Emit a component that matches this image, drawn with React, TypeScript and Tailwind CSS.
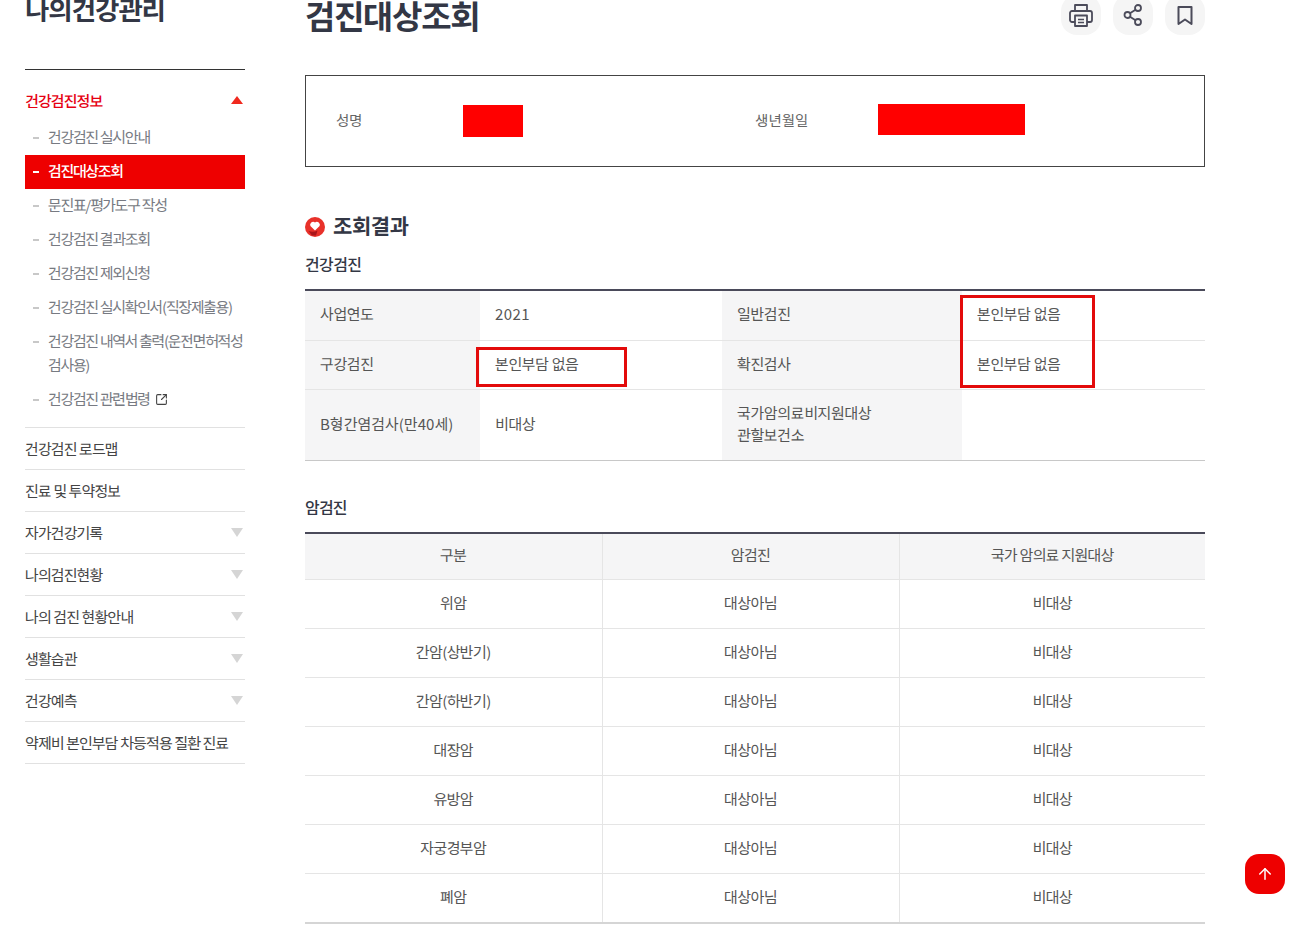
import { ArrowUp, SquareArrowOutUpRight } from "lucide-react";

const SUB_MENU = [
  "건강검진 실시안내",
  "검진대상조회",
  "문진표/평가도구 작성",
  "건강검진 결과조회",
  "건강검진 제외신청",
  "건강검진 실시확인서(직장제출용)",
  "건강검진 내역서 출력(운전면허적성검사용)",
  "건강검진 관련법령",
];

const MAIN_MENU = [
  { label: "건강검진 로드맵", arrow: false },
  { label: "진료 및 투약정보", arrow: false },
  { label: "자가건강기록", arrow: true },
  { label: "나의검진현황", arrow: true },
  { label: "나의 검진 현황안내", arrow: true },
  { label: "생활습관", arrow: true },
  { label: "건강예측", arrow: true },
  { label: "약제비 본인부담 차등적용 질환 진료", arrow: false },
];

const CANCERS = ["위암", "간암(상반기)", "간암(하반기)", "대장암", "유방암", "자궁경부암", "폐암"];

function Sidebar() {
  return (
    <aside className="w-[220px] shrink-0">
      <h2 className="mt-[-11px] h-[80px] text-[26.5px] leading-[40px] font-bold text-[#333745] tracking-[-0.04em]">나의건강관리</h2>
      <div className="border-t border-[#333] pt-[19px]">
        <div className="flex h-[24px] items-center justify-between text-[15px] font-medium tracking-[-0.06em] text-[#e60012]">
          건강검진정보
          <span className="mr-[2px] mb-[2px] h-0 w-0 border-x-[6px] border-b-[8px] border-x-transparent border-b-[#f0291e]" />
        </div>
        <ul className="mt-[8px] mb-[10px]">
          {SUB_MENU.map((item, i) => (
            <li
              key={item}
              className={`flex items-start pt-[4px] pb-[6px] pl-[8px] text-[15px] leading-[24px] tracking-[-0.09em] ${
                i === 1 ? "bg-[#ee0000] font-medium text-white" : "text-[#777a82]"
              }`}
            >
              <span className={`mt-[12px] mr-[9px] h-[2px] w-[6px] shrink-0 ${i === 1 ? "bg-white" : "bg-[#c8c8c8]"}`} />
              <span>
                {item}
                {i === 7 && <SquareArrowOutUpRight className="ml-[5px] inline size-[13px] align-[-1px] text-[#444]" />}
              </span>
            </li>
          ))}
        </ul>
        <ul className="border-t border-[#e1e1e1]">
          {MAIN_MENU.map((m) => (
            <li
              key={m.label}
              className="flex h-[42px] items-center justify-between border-b border-[#e1e1e1] pt-[1px] text-[15px] tracking-[-0.06em] text-[#444]"
            >
              {m.label}
              {m.arrow && (
                <span className="mr-[2px] mb-[1px] h-0 w-0 border-x-[6px] border-t-[9px] border-x-transparent border-t-[#d5d5d5]" />
              )}
            </li>
          ))}
        </ul>
      </div>
    </aside>
  );
}

function ToolButton({ children }: { children: React.ReactNode }) {
  return (
    <button className="flex size-[40px] items-center justify-center rounded-[16px] bg-[#f5f5f5] text-[#4b4b5a]">
      <svg viewBox="0 0 24 24" className="size-[24px]" fill="none" stroke="currentColor" strokeWidth="1.8" strokeLinejoin="round">
        {children}
      </svg>
    </button>
  );
}

const thClass = "bg-[#f5f5f6] pb-[2px] pl-[15px] text-left font-normal text-[#555]";
const tdClass = "pb-[2px] pl-[15px] text-[#555]";

function Content() {
  return (
    <main className="w-[900px] shrink-0">
      <div className="flex h-[75px] items-start justify-between">
        <h1 className="mt-[-10px] text-[33px] leading-[50px] font-bold tracking-[-0.04em] text-[#333745]">검진대상조회</h1>
        <div className="mt-[-5px] flex gap-[12px]">
          <ToolButton>
            <path d="M6 8V2h12v6" />
            <path d="M6 19H3a2 2 0 0 1-2-2V10a2 2 0 0 1 2-2h18a2 2 0 0 1 2 2v7a2 2 0 0 1-2 2h-3" />
            <path d="M6 12.500h12V23H6Z" />
            <path d="M9 16.500h6M9 19.500h6" strokeWidth="1.4" />
          </ToolButton>
          <ToolButton>
            <circle cx="6.500" cy="12" r="3" />
            <circle cx="17" cy="5" r="3" />
            <circle cx="17" cy="19" r="3" />
            <path d="m9 10.300 5.500-3.600M9 13.700l5.500 3.600" />
          </ToolButton>
          <ToolButton>
            <path d="M5.500 4h13v17l-6.500-4.500L5.500 21Z" strokeWidth="2" />
          </ToolButton>
        </div>
      </div>

      <div className="flex h-[92px] items-center border border-[#444] pl-[30px] text-[14.5px] text-[#666]">
        <span className="w-[127px] pb-[2px]">성명</span>
        <span className="h-[32px] w-[60px] bg-[#ff0000]" />
        <span className="ml-[232px] w-[123px] pb-[2px]">생년월일</span>
        <span className="mb-[3px] h-[31px] w-[147px] bg-[#ff0000]" />
      </div>

      <h3 className="mt-[44px] flex h-[30px] items-center gap-[8px] text-[21px] font-bold tracking-[-0.02em] text-[#333745]">
        <svg viewBox="0 0 20 20" className="mt-[2px] size-[20px]">
          <circle cx="10" cy="10" r="10" fill="#e8312a" />
          <path d="M3.500 14c3 1 6 1 9-.5L11 18.500H7Z" fill="#a9151a" />
          <path d="M10 13.500 5.400 9A3 3 0 0 1 10 5.400 3 3 0 0 1 14.600 9Z" fill="#fff" />
        </svg>
        조회결과
      </h3>
      <h4 className="mt-[12px] h-[24px] pb-[2px] text-[16px] leading-[22px] font-medium tracking-[-0.04em] text-[#333745]">건강검진</h4>

      <div className="relative mt-[12px]">
        <table className="w-[900px] table-fixed border-t-2 border-b border-t-[#4a4a5a] border-b-[#c8c8c8] text-[15px] leading-[22px] tracking-[-0.025em]">
          <colgroup>
            <col className="w-[175px]" />
            <col className="w-[242px]" />
            <col className="w-[240px]" />
            <col className="w-[243px]" />
          </colgroup>
          <tbody>
            <tr className="h-[50px] border-b border-[#e5e5e5]">
              <th className={thClass}>사업연도</th>
              <td className={`${tdClass} tracking-[0.03em]`}>2021</td>
              <th className={thClass}>일반검진</th>
              <td className={tdClass}>본인부담 없음</td>
            </tr>
            <tr className="h-[49px] border-b border-[#e5e5e5]">
              <th className={thClass}>구강검진</th>
              <td className={tdClass}>본인부담 없음</td>
              <th className={thClass}>확진검사</th>
              <td className={tdClass}>본인부담 없음</td>
            </tr>
            <tr className="h-[71px]">
              <th className={`${thClass} tracking-normal`}>B형간염검사(만40세)</th>
              <td className={tdClass}>비대상</td>
              <th className={thClass}>국가암의료비지원대상<br />관할보건소</th>
              <td className={tdClass}></td>
            </tr>
          </tbody>
        </table>
        <div className="absolute top-[58px] left-[171px] h-[40px] w-[151px] border-[3px] border-[#e30b0b]" />
        <div className="absolute top-[6px] left-[655px] h-[93px] w-[135px] border-[3px] border-[#e30b0b]" />
      </div>

      <h4 className="mt-[35px] h-[24px] pb-[2px] text-[16px] leading-[22px] font-medium tracking-[-0.05em] text-[#333745]">암검진</h4>
      <table className="mt-[12px] w-[900px] table-fixed border-t-2 border-b-2 border-t-[#4a4a5a] border-b-[#d5d5d5] text-center text-[15px] tracking-[-0.04em] text-[#555]">
        <colgroup>
          <col className="w-[297px]" />
          <col className="w-[297px]" />
          <col className="w-[306px]" />
        </colgroup>
        <thead>
          <tr className="h-[47px] border-b border-[#e5e5e5] bg-[#f5f5f6]">
            <th className="border-r border-[#e5e5e5] pb-[2px] font-normal">구분</th>
            <th className="border-r border-[#e5e5e5] pb-[2px] font-normal">암검진</th>
            <th className="pb-[2px] font-normal tracking-[-0.05em]">국가 암의료 지원대상</th>
          </tr>
        </thead>
        <tbody>
          {CANCERS.map((c) => (
            <tr key={c} className="h-[49px] border-b border-[#e5e5e5] last:border-b-0">
              <td className="border-r border-[#e5e5e5] pb-[2px]">{c}</td>
              <td className="border-r border-[#e5e5e5] pb-[2px]">대상아님</td>
              <td className="pb-[2px]">비대상</td>
            </tr>
          ))}
        </tbody>
      </table>
    </main>
  );
}

export default function App() {
  return (
    <div className="relative h-[929px] overflow-hidden bg-white font-['Noto_Sans_KR','Noto_Sans_CJK_KR',sans-serif]">
      <div className="flex gap-[60px] pl-[25px]">
        <Sidebar />
        <Content />
      </div>
      <button className="absolute top-[854px] left-[1245px] flex size-[40px] items-center justify-center rounded-[14px] bg-[#ee0000] text-white">
        <ArrowUp className="size-[18px]" strokeWidth={2} />
      </button>
    </div>
  );
}
